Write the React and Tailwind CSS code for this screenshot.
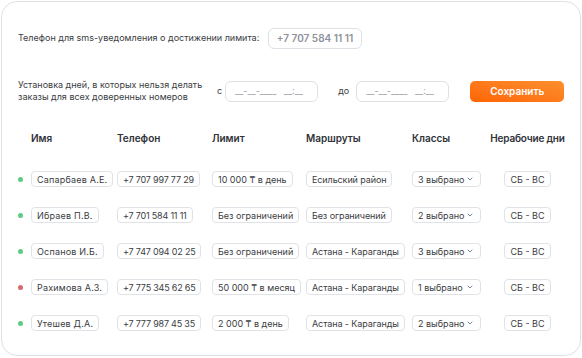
import { ChevronDown } from 'lucide-react';

const rows = [
  { status: 'ok', name: 'Сапарбаев А.Е.', phone: '+7 707 997 77 29', limit: '10 000 ₸ в день', route: 'Есильский район', classes: '3 выбрано' },
  { status: 'ok', name: 'Ибраев П.В.', phone: '+7 701 584 11 11', limit: 'Без ограничений', route: 'Без ограничений', classes: '2 выбрано' },
  { status: 'ok', name: 'Оспанов И.Б.', phone: '+7 747 094 02 25', limit: 'Без ограничений', route: 'Астана - Караганды', classes: '3 выбрано' },
  { status: 'off', name: 'Рахимова А.З.', phone: '+7 775 345 62 65', limit: '50 000 ₸ в месяц', route: 'Астана - Караганды', classes: '1 выбрано' },
  { status: 'ok', name: 'Утешев Д.А.', phone: '+7 777 987 45 35', limit: '2 000 ₸ в день', route: 'Астана - Караганды', classes: '2 выбрано' },
];

function Cell({ children, className = '' }) {
  return (
    <span className={`inline-flex h-[16px] items-center rounded-[4px] border border-[#dfe2e7] px-[5px] text-[9px] leading-none text-[#3a3d42] whitespace-nowrap ${className}`}>
      {children}
    </span>
  );
}

function App() {
  return (
    <div className="w-[582px] h-[358px] bg-white pt-px pl-px" style={{ fontFamily: 'Inter, "Noto Sans", sans-serif' }}>
      <div className="w-[580px] h-[355px] rounded-[16px] border border-[#dde1e6] bg-white pl-[16px] pt-[26px]">
        <div className="flex items-center h-[20px]">
          <span className="w-[250px] text-[9px] text-[#3a3d42]">Телефон для sms-уведомления о достижении лимита:</span>
          <div className="w-[94px] h-[21px] rounded-[6px] border border-[#dde1e6] flex items-center justify-center text-[10px] font-semibold text-[#8e929a]">
            +7 707 584 11 11
          </div>
        </div>

        <div className="flex items-center h-[20px] mt-[33px]">
          <div className="w-[199px] text-[9px] leading-[12px] text-[#3a3d42]">
            Установка дней, в которых нельзя делать<br />заказы для всех доверенных номеров
          </div>
          <span className="text-[9px] text-[#3a3d42]">с</span>
          <div className="ml-[3px] w-[93px] h-[21px] rounded-[6px] border border-[#dde1e6] flex items-center pl-[9px] text-[9px] text-[#9a9ea5] whitespace-pre">
            {'__-__-____   __:__'}
          </div>
          <span className="ml-[20px] text-[9px] text-[#3a3d42]">до</span>
          <div className="ml-[7px] w-[93px] h-[21px] rounded-[6px] border border-[#dde1e6] flex items-center pl-[9px] text-[9px] text-[#9a9ea5] whitespace-pre">
            {'__-__-____   __:__'}
          </div>
          <button className="ml-[21px] w-[94px] h-[21px] rounded-[5px] bg-gradient-to-tr from-[#ff6400] to-[#fb8f2c] text-white text-[10px] font-semibold">
            Сохранить
          </button>
        </div>

        <div className="grid grid-cols-[13px_86px_95px_94px_106px_80px_71px] items-center h-[14px] mt-[30px] text-[10px] font-semibold text-[#2f3237] whitespace-nowrap">
          <span />
          <span>Имя</span>
          <span>Телефон</span>
          <span>Лимит</span>
          <span>Маршруты</span>
          <span>Классы</span>
          <span className="flex justify-center tracking-[-0.2px]">Нерабочие дни</span>
        </div>

        <div className="flex flex-col gap-[20px] mt-[26px]">
          {rows.map((r) => (
            <div key={r.name} className="grid grid-cols-[13px_86px_95px_94px_106px_80px_71px] items-center h-[16px]">
              <span className={`w-[5px] h-[5px] rounded-full ${r.status === 'ok' ? 'bg-[#5ccb83]' : 'bg-[#d9686d]'}`} />
              <div className="flex"><Cell className="tracking-[0.2px]">{r.name}</Cell></div>
              <div className="flex"><Cell className="tracking-[-0.2px]">{r.phone}</Cell></div>
              <div className="flex"><Cell>{r.limit}</Cell></div>
              <div className="flex"><Cell className="tracking-[-0.1px]">{r.route}</Cell></div>
              <div className="flex">
                <span className="inline-flex w-[69px] h-[16px] items-center justify-between rounded-[4px] border border-[#dfe2e7] pl-[5px] pr-[6px] text-[9px] leading-none text-[#3a3d42]">
                  {r.classes}
                  <ChevronDown size={8} strokeWidth={2.5} className="text-[#5a6b85]" />
                </span>
              </div>
              <div className="flex justify-center"><Cell>СБ - ВС</Cell></div>
            </div>
          ))}
        </div>
      </div>
    </div>
  );
}

export default App;
